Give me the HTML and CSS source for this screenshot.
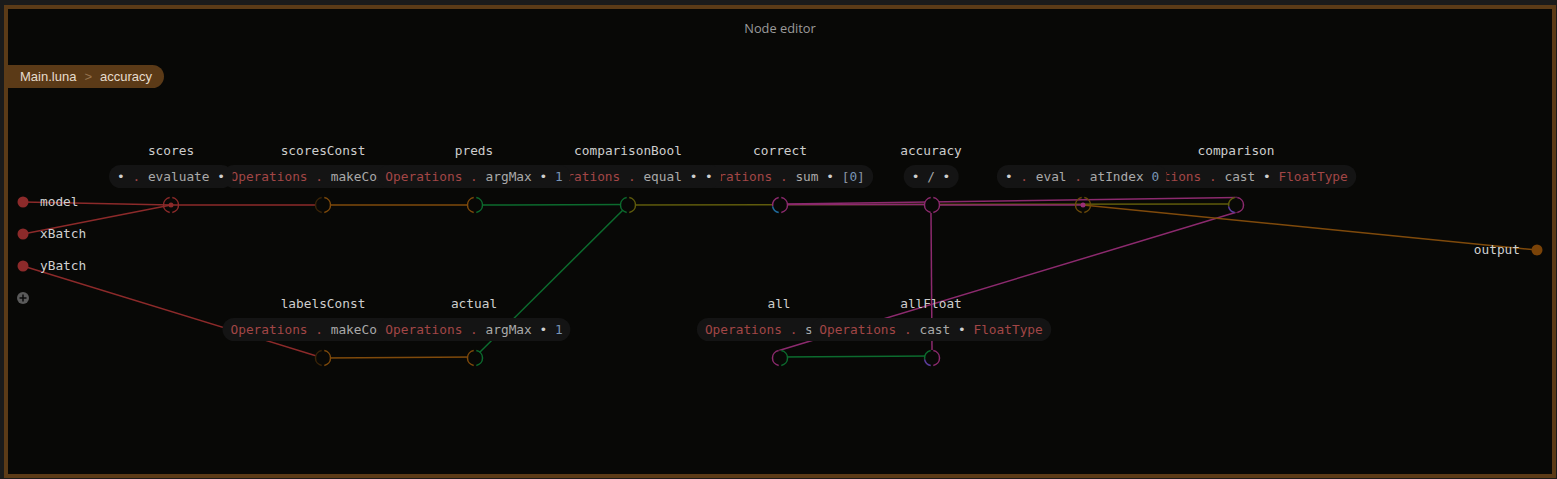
FILE: index.html
```html
<!DOCTYPE html>
<html lang="en">
<head>
    <meta charset="UTF-8">
    <title>Node editor</title>
    <link rel="stylesheet" href="styles.css">
</head>
<body>
    <div class="panel">
        <div class="title">Node editor</div>
        <div class="breadcrumb">
            <span>Main.luna</span>
            <span class="sep">&gt;</span>
            <span>accuracy</span>
        </div>

        <div class="graph">
            <svg class="edges" width="1557" height="479">
                <!-- connections -->
                <g class="lines">
                    <line class="red" x1="23" y1="202" x2="171" y2="205"/>
                    <line class="red" x1="23" y1="234" x2="171" y2="205"/>
                    <line class="red" x1="23" y1="266" x2="323" y2="358"/>
                    <line class="red" x1="171" y1="205" x2="323" y2="205"/>
                    <line class="orange" x1="323" y1="205" x2="475" y2="205"/>
                    <line class="green" x1="475" y1="205" x2="628" y2="204.5"/>
                    <line class="orange" x1="323" y1="358" x2="475" y2="357"/>
                    <line class="green" x1="475" y1="357" x2="628" y2="205"/>
                    <line class="olive" x1="628" y1="205" x2="1236" y2="204"/>
                    <line class="pink" x1="780" y1="204.5" x2="932" y2="204.5"/>
                    <line class="pink" x1="932" y1="205" x2="1083" y2="205"/>
                    <line class="pink" x1="786" y1="204" x2="1237" y2="197.5"/>
                    <line class="pink" x1="1237" y1="212" x2="779" y2="350.5"/>
                    <line class="green" x1="780" y1="357" x2="932" y2="356"/>
                    <line class="pink" x1="931" y1="213" x2="932" y2="350"/>
                    <line class="orange" x1="1083" y1="205" x2="1537" y2="250"/>
                </g>

                <!-- graph ports -->
                <circle class="port-in" cx="23" cy="202" r="5.5"/>
                <circle class="port-in" cx="23" cy="234" r="5.5"/>
                <circle class="port-in" cx="23" cy="266" r="5.5"/>
                <circle class="port-out" cx="1537" cy="250" r="5.5"/>
                <g transform="translate(23,298)">
                    <circle class="add" r="6"/>
                    <path class="add-plus" d="M-3.5 0H3.5M0-3.5V3.5"/>
                </g>

                <!-- node circles -->
                <g class="node-c open" transform="translate(171,205)">
                    <path class="red" d="M-1.3-7.39A7.5 7.5 0 0 0-1.3 7.39"/>
                    <path class="red" d="M1.3-7.39A7.5 7.5 0 0 1 1.3 7.39"/>
                    <circle class="dot-red" r="2.5"/>
                </g>
                <g class="node-c" transform="translate(323,205)">
                    <circle class="bg" r="7.5"/>
                    <path class="dim" d="M-1.3-7.39A7.5 7.5 0 0 0-1.3 7.39"/>
                    <path class="orange" d="M1.3-7.39A7.5 7.5 0 0 1 1.3 7.39"/>
                </g>
                <g class="node-c" transform="translate(475,205)">
                    <circle class="bg" r="7.5"/>
                    <path class="orange" d="M-1.3-7.39A7.5 7.5 0 0 0-1.3 7.39"/>
                    <path class="green" d="M1.3-7.39A7.5 7.5 0 0 1 1.3 7.39"/>
                </g>
                <g class="node-c" transform="translate(628,205)">
                    <circle class="bg" r="7.5"/>
                    <path class="green" d="M-1.3-7.39A7.5 7.5 0 0 0-1.3 7.39"/>
                    <path class="olive" d="M1.3-7.39A7.5 7.5 0 0 1 1.3 7.39"/>
                </g>
                <g class="node-c" transform="translate(780,205)">
                    <circle class="bg" r="7.5"/>
                    <path class="pink" d="M-1.3-7.39A7.5 7.5 0 0 0-7.39 1.3"/>
                    <path class="blue" d="M-7.39 1.3A7.5 7.5 0 0 0-1.3 7.39"/>
                    <path class="pink" d="M1.3-7.39A7.5 7.5 0 0 1 1.3 7.39"/>
                </g>
                <g class="node-c" transform="translate(932,205)">
                    <circle class="bg" r="7.5"/>
                    <path class="pink" d="M-1.3-7.39A7.5 7.5 0 0 0-1.3 7.39"/>
                    <path class="pink" d="M1.3-7.39A7.5 7.5 0 0 1 1.3 7.39"/>
                </g>
                <g class="node-c open" transform="translate(1083,205)">
                    <path class="brown" d="M-1.3-7.39A7.5 7.5 0 0 0-1.3 7.39"/>
                    <path class="brown" d="M1.3-7.39A7.5 7.5 0 0 1 1.3 7.39"/>
                    <circle class="dot-pink" r="2.5"/>
                </g>
                <g class="node-c" transform="translate(1236,205)">
                    <circle class="bg" r="7.5"/>
                    <path class="olive" d="M-1.3-7.39A7.5 7.5 0 0 0-7.39 1.3"/>
                    <path class="purple" d="M-7.39 1.3A7.5 7.5 0 0 0-1.3 7.39"/>
                    <path class="pink" d="M1.3-7.39A7.5 7.5 0 0 1 1.3 7.39"/>
                </g>
                <g class="node-c" transform="translate(323,358)">
                    <circle class="bg" r="7.5"/>
                    <path class="dim" d="M-1.3-7.39A7.5 7.5 0 0 0-1.3 7.39"/>
                    <path class="orange" d="M1.3-7.39A7.5 7.5 0 0 1 1.3 7.39"/>
                </g>
                <g class="node-c" transform="translate(475,358)">
                    <circle class="bg" r="7.5"/>
                    <path class="orange" d="M-1.3-7.39A7.5 7.5 0 0 0-1.3 7.39"/>
                    <path class="green" d="M1.3-7.39A7.5 7.5 0 0 1 1.3 7.39"/>
                </g>
                <g class="node-c" transform="translate(780,358)">
                    <circle class="bg" r="7.5"/>
                    <path class="pink" d="M-1.3-7.39A7.5 7.5 0 0 0-1.3 7.39"/>
                    <path class="green" d="M1.3-7.39A7.5 7.5 0 0 1 1.3 7.39"/>
                </g>
                <g class="node-c" transform="translate(932,358)">
                    <circle class="bg" r="7.5"/>
                    <path class="green" d="M-1.3-7.39A7.5 7.5 0 0 0-7.39 1.3"/>
                    <path class="purple" d="M-7.39 1.3A7.5 7.5 0 0 0-1.3 7.39"/>
                    <path class="pink" d="M1.3-7.39A7.5 7.5 0 0 1 1.3 7.39"/>
                </g>
            </svg>

            <div class="port-label" style="left:40px;top:194px">model</div>
            <div class="port-label" style="left:40px;top:226px">xBatch</div>
            <div class="port-label" style="left:40px;top:258px">yBatch</div>
            <div class="port-label out" style="right:37px;top:242px">output</div>

            <!-- nodes, in stacking order -->
            <div class="node" style="left:780px;top:205px">
                <div class="name">correct</div>
                <div class="expr"><span class="mod">Operations</span> <span class="op">.</span> <span class="fn">sum</span> <span class="arg">•</span> <span class="lit">[<span class="num">0</span>]</span></div>
            </div>
            <div class="node" style="left:628px;top:205px">
                <div class="name">comparisonBool</div>
                <div class="expr"><span class="mod">Operations</span> <span class="op">.</span> <span class="fn">equal</span> <span class="arg">•</span> <span class="arg">•</span></div>
            </div>
            <div class="node" style="left:323px;top:205px">
                <div class="name">scoresConst</div>
                <div class="expr"><span class="mod">Operations</span> <span class="op">.</span> <span class="fn">makeConst</span> <span class="arg">•</span></div>
            </div>
            <div class="node" style="left:171px;top:205px">
                <div class="name">scores</div>
                <div class="expr"><span class="arg">•</span> <span class="op">.</span> <span class="fn">evaluate</span> <span class="arg">•</span></div>
            </div>
            <div class="node" style="left:474px;top:205px">
                <div class="name">preds</div>
                <div class="expr"><span class="mod">Operations</span> <span class="op">.</span> <span class="fn">argMax</span> <span class="arg">•</span> <span class="num">1</span></div>
            </div>
            <div class="node" style="left:931px;top:205px">
                <div class="name">accuracy</div>
                <div class="expr"><span class="arg">•</span> <span class="fn">/</span> <span class="arg">•</span></div>
            </div>
            <div class="node" style="left:1236px;top:205px">
                <div class="name">comparison</div>
                <div class="expr"><span class="mod">Operations</span> <span class="op">.</span> <span class="fn">cast</span> <span class="arg">•</span> <span class="mod">FloatType</span></div>
            </div>
            <div class="node" style="left:1082px;top:205px">
                <div class="expr"><span class="arg">•</span> <span class="op">.</span> <span class="fn">eval</span> <span class="op">.</span> <span class="fn">atIndex</span> <span class="num">0</span></div>
            </div>
            <div class="node" style="left:323px;top:358px">
                <div class="name">labelsConst</div>
                <div class="expr"><span class="mod">Operations</span> <span class="op">.</span> <span class="fn">makeConst</span> <span class="arg">•</span></div>
            </div>
            <div class="node" style="left:474px;top:358px">
                <div class="name">actual</div>
                <div class="expr"><span class="mod">Operations</span> <span class="op">.</span> <span class="fn">argMax</span> <span class="arg">•</span> <span class="num">1</span></div>
            </div>
            <div class="node" style="left:782px;top:358px">
                <div class="name all-name">all</div>
                <div class="expr"><span class="mod">Operations</span> <span class="op">.</span> <span class="fn">sum</span> <span class="arg">•</span> <span class="num">0</span></div>
            </div>
            <div class="node" style="left:931px;top:358px">
                <div class="name">allFloat</div>
                <div class="expr"><span class="mod">Operations</span> <span class="op">.</span> <span class="fn">cast</span> <span class="arg">•</span> <span class="mod">FloatType</span></div>
            </div>
        </div>
    </div>
</body>
</html>
```

FILE: styles.css
```css
* {
    margin: 0;
    padding: 0;
    box-sizing: border-box;
}

body {
    background-color: #1b1b1b;
    font-family: "Liberation Sans", Arial, sans-serif;
}

.panel {
    position: relative;
    overflow: hidden;
    height: 473px;
    margin: 5px 1px 1px 4px;
    border: 4px solid #5c3b17;
    background-color: #080806;
}

.title {
    margin-top: 10px;
    line-height: 18px;
    text-align: center;
    font-family: "Open Sans", "Noto Sans", sans-serif;
    font-size: 12.8px;
    color: #9b9b9b;
}

.breadcrumb {
    position: relative;
    z-index: 5;
    display: inline-flex;
    align-items: center;
    gap: 8px;
    height: 23px;
    margin-top: 28px;
    padding: 0 12px;
    border-radius: 0 12px 12px 0;
    background-color: #5b3a17;
    font-size: 13px;
    color: #e6dccd;
}

.breadcrumb .sep {
    color: #96744f;
}

/* free canvas, page coordinates */
.graph {
    position: absolute;
    left: -8px;
    top: -9px;
    width: 1557px;
    height: 479px;
    font-family: "DejaVu Sans Mono", "Liberation Mono", monospace;
    font-size: 12.8px;
}

.edges {
    position: absolute;
    left: 0;
    top: 0;
}

.edges line,
.edges path {
    fill: none;
    stroke-width: 1.5;
}

.red { stroke: #8c2a2a; }
.orange { stroke: #7f4a0b; }
.green { stroke: #0c6b2e; }
.olive { stroke: #5f5b0c; }
.pink { stroke: #8c2a6e; }
.blue { stroke: #1f6b9c; }
.purple { stroke: #5b3c9c; }
.brown { stroke: #6b4a0a; }
.dim { stroke: #3a2408; }

.node-c .bg {
    fill: #080806;
}

.dot-red { fill: #8c2a2a; }
.dot-pink { fill: #9a2e78; }

.port-in { fill: #8c2a2a; }
.port-out { fill: #7a4308; }

.add { fill: #5a5a5a; }
.add-plus {
    stroke: #0a0a0a;
    stroke-width: 2;
}

.port-label {
    position: absolute;
    line-height: 16px;
    color: #d0d0d0;
}

.node {
    position: absolute;
    width: 0;
    height: 0;
}

.name {
    position: absolute;
    top: -62px;
    left: 0;
    transform: translateX(-50%);
    line-height: 16px;
    white-space: nowrap;
    color: #cdcdcd;
}

.all-name {
    left: -3px;
}

.expr {
    position: absolute;
    top: -40px;
    left: 0;
    transform: translateX(-50%);
    height: 23px;
    padding: 0 8px;
    border-radius: 12px;
    background-color: #141414;
    line-height: 23px;
    white-space: pre;
    color: #a9a9a9;
}

.expr .mod,
.expr .op {
    color: #a24646;
}

.expr .fn {
    color: #a9a9a9;
}

.expr .arg {
    color: #cfcfcf;
}

.expr .num {
    color: #7995b6;
}

.expr .lit {
    color: #8a94a2;
}
```
